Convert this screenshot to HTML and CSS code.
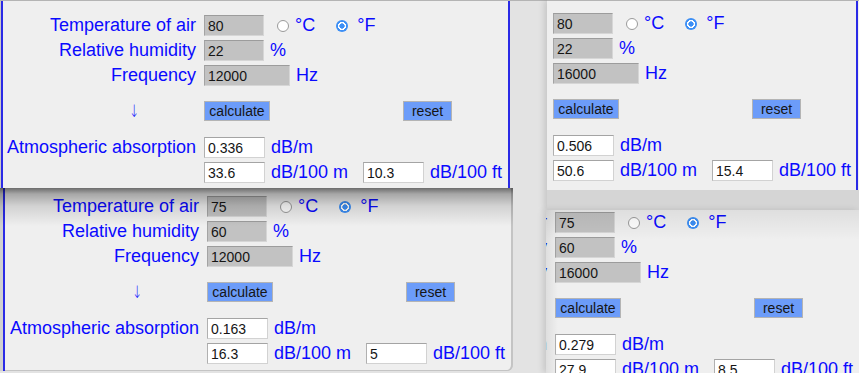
FILE: index.html
```html
<!DOCTYPE html>
<html lang="en">
	<head>
		<meta charset="UTF-8">
		<title>Atmospheric absorption</title>
		<link rel="stylesheet" href="styles.css">
	</head>
	<body>
		<div class="desk">
			<div class="shot shot-a">
				<form class="form">
					<div class="row">
						<span class="label">Temperature of air</span>
						<input class="field" value="80">
						<input class="radio" type="radio" name="ua">
						<span class="unit deg">°C</span>
						<input class="radio radio-f" type="radio" name="ua" checked>
						<span class="unit deg-f">°F</span>
					</div>
					<div class="row">
						<span class="label">Relative humidity</span>
						<input class="field" value="22">
						<span class="unit">%</span>
					</div>
					<div class="row">
						<span class="label">Frequency</span>
						<input class="field field-wide" value="12000">
						<span class="unit">Hz</span>
					</div>
					<div class="row row-buttons">
						<span class="arrow">↓</span>
						<button type="button" class="btn btn-calc">calculate</button>
						<button type="button" class="btn btn-reset">reset</button>
					</div>
					<div class="row">
						<span class="label">Atmospheric absorption</span>
						<input class="field out" value="0.336">
						<span class="unit">dB/m</span>
					</div>
					<div class="row">
						<span class="label"></span>
						<input class="field out" value="33.6">
						<span class="unit">dB/100 m</span>
						<input class="field out out-ft" value="10.3">
						<span class="unit">dB/100 ft</span>
					</div>
				</form>
			</div>

			<div class="shot shot-b">
				<form class="form">
					<div class="row">
						<span class="label">Temperature of air</span>
						<input class="field" value="75">
						<input class="radio" type="radio" name="ub">
						<span class="unit deg">°C</span>
						<input class="radio radio-f" type="radio" name="ub" checked>
						<span class="unit deg-f">°F</span>
					</div>
					<div class="row">
						<span class="label">Relative humidity</span>
						<input class="field" value="60">
						<span class="unit">%</span>
					</div>
					<div class="row">
						<span class="label">Frequency</span>
						<input class="field field-wide" value="12000">
						<span class="unit">Hz</span>
					</div>
					<div class="row row-buttons">
						<span class="arrow">↓</span>
						<button type="button" class="btn btn-calc">calculate</button>
						<button type="button" class="btn btn-reset">reset</button>
					</div>
					<div class="row">
						<span class="label">Atmospheric absorption</span>
						<input class="field out" value="0.163">
						<span class="unit">dB/m</span>
					</div>
					<div class="row">
						<span class="label"></span>
						<input class="field out" value="16.3">
						<span class="unit">dB/100 m</span>
						<input class="field out out-ft" value="5">
						<span class="unit">dB/100 ft</span>
					</div>
				</form>
			</div>

			<div class="shot shot-c">
				<form class="form">
					<div class="row">
						<span class="label">Temperature of air</span>
						<input class="field" value="80">
						<input class="radio" type="radio" name="uc">
						<span class="unit deg">°C</span>
						<input class="radio radio-f" type="radio" name="uc" checked>
						<span class="unit deg-f">°F</span>
					</div>
					<div class="row">
						<span class="label">Relative humidity</span>
						<input class="field" value="22">
						<span class="unit">%</span>
					</div>
					<div class="row">
						<span class="label">Frequency</span>
						<input class="field field-wide" value="16000">
						<span class="unit">Hz</span>
					</div>
					<div class="row row-buttons">
						<span class="arrow">↓</span>
						<button type="button" class="btn btn-calc">calculate</button>
						<button type="button" class="btn btn-reset">reset</button>
					</div>
					<div class="row">
						<span class="label">Atmospheric absorption</span>
						<input class="field out" value="0.506">
						<span class="unit">dB/m</span>
					</div>
					<div class="row">
						<span class="label"></span>
						<input class="field out" value="50.6">
						<span class="unit">dB/100 m</span>
						<input class="field out out-ft" value="15.4">
						<span class="unit">dB/100 ft</span>
					</div>
				</form>
			</div>

			<div class="shot shot-d">
				<form class="form">
					<div class="row">
						<span class="label">Temperature of air</span>
						<input class="field" value="75">
						<input class="radio" type="radio" name="ud">
						<span class="unit deg">°C</span>
						<input class="radio radio-f" type="radio" name="ud" checked>
						<span class="unit deg-f">°F</span>
					</div>
					<div class="row">
						<span class="label">Relative humidity</span>
						<input class="field" value="60">
						<span class="unit">%</span>
					</div>
					<div class="row">
						<span class="label">Frequency</span>
						<input class="field field-wide" value="16000">
						<span class="unit">Hz</span>
					</div>
					<div class="row row-buttons">
						<span class="arrow">↓</span>
						<button type="button" class="btn btn-calc">calculate</button>
						<button type="button" class="btn btn-reset">reset</button>
					</div>
					<div class="row">
						<span class="label">Atmospheric absorption</span>
						<input class="field out" value="0.279">
						<span class="unit">dB/m</span>
					</div>
					<div class="row">
						<span class="label"></span>
						<input class="field out" value="27.9">
						<span class="unit">dB/100 m</span>
						<input class="field out out-ft" value="8.5">
						<span class="unit">dB/100 ft</span>
					</div>
				</form>
			</div>
		</div>
	</body>
</html>
```

FILE: styles.css
```css
*, *::before, *::after {
	box-sizing: border-box;
}

html, body {
	margin: 0;
	padding: 0;
}

body {
	font-family: "Liberation Sans", Arial, sans-serif;
	background: #e3e3e3;
}

.desk {
	position: relative;
	width: 859px;
	height: 373px;
	overflow: hidden;
	background: #e3e3e3;
	box-shadow: inset 0 1px #b4b4b4;
}

/* each shot is one cropped screenshot of the same form */
.shot {
	position: absolute;
	overflow: hidden;
	background: #efefef;
}

.shot-a {
	left: 0;
	top: 0;
	width: 510px;
	height: 188px;
	box-shadow: inset 0 1px #b4b4b4, inset 1px 0 #c8c8c8, inset 3px 0 #2a2ae6, inset -2px 0 #2a2ae6;
}

.shot-b {
	left: 0;
	top: 188px;
	width: 513px;
	height: 183px;
	border-radius: 0 0 6px 0;
	box-shadow: inset 3px 0 #d0d0d0, inset 5px 0 #2a2ae6, inset -2px 0 #c4c4c4, inset 0 -1px #c4c4c4;
}

.shot-b::after {
	content: "";
	position: absolute;
	left: 0;
	right: 0;
	top: 0;
	height: 40px;
	background: linear-gradient(rgba(0, 0, 0, .55), rgba(0, 0, 0, .3) 6px, rgba(0, 0, 0, .12) 18px, rgba(0, 0, 0, 0) 38px);
}

.shot-c {
	left: 547px;
	top: 0;
	width: 312px;
	height: 210px;
	border-bottom: 20px solid #d5d5d5;
	box-shadow: inset 0 1px #b4b4b4, inset -1px 0 #efefef, inset -3px 0 #2a2ae6, -3px 0 6px rgba(0, 0, 0, .12);
}

.shot-d {
	left: 546px;
	top: 210px;
	width: 313px;
	height: 163px;
	box-shadow: -3px 0 6px rgba(0, 0, 0, .12);
}

.shot-d::after {
	content: "";
	position: absolute;
	left: 0;
	right: 0;
	top: 0;
	bottom: 0;
	background: linear-gradient(rgba(0, 0, 0, .07), rgba(0, 0, 0, 0) 30px),
		linear-gradient(90deg, rgba(0, 0, 0, .07), rgba(0, 0, 0, 0) 12px);
}

.form {
	width: 510px;
	margin: 0;
	padding-top: 15px;
}

.shot-b .form {
	margin: -7px 0 0 3px;
}

.shot-c .form {
	margin: -2px 0 0 -198px;
}

.shot-d .form {
	margin: -13px 0 0 -195px;
}

.row {
	display: flex;
	align-items: center;
	height: 21px;
	margin-bottom: 4px;
}

.row-buttons {
	height: 20px;
	margin-top: 15px;
	margin-bottom: 16px;
}

.label {
	flex: none;
	width: 204px;
	padding-right: 8px;
	text-align: right;
	color: #0a0aff;
	font-size: 18px;
	white-space: nowrap;
}

.unit {
	margin-left: 6px;
	color: #0a0aff;
	font-size: 18px;
	white-space: nowrap;
}

.unit.deg {
	margin-left: 6px;
}

.unit.deg-f {
	margin-left: 9px;
}

.field {
	flex: none;
	width: 60px;
	height: 21px;
	margin: 0;
	padding: 0 3px;
	border: 1px solid;
	border-color: #9c9c9c #d6d6d6 #d6d6d6 #a4a4a4;
	background: #c2c2c2;
	color: #151515;
	font-family: "Liberation Sans", Arial, sans-serif;
	font-size: 14px;
	outline: none;
}

.field-wide {
	width: 86px;
}

.field.out {
	width: 61px;
	background: #fff;
	border-color: #a4a4a4 #d2d2d2 #d2d2d2 #b0b0b0;
}

.field.out-ft {
	margin-left: 15px;
}

.radio {
	appearance: none;
	flex: none;
	width: 12px;
	height: 12px;
	margin: 0 0 0 13px;
	border: 1px solid #9a9a9a;
	border-radius: 50%;
	background: #fff;
}

.radio-f {
	margin-left: 21px;
}

.radio:checked {
	border: 0;
	background: radial-gradient(circle, #3d8ff5 0 2.4px, #fff 2.9px 3.8px, #3d8ff5 4.3px);
}

.arrow {
	flex: none;
	width: 204px;
	padding-left: 64px;
	text-align: center;
	color: #0a0aff;
	font-family: "DejaVu Sans", sans-serif;
	font-size: 17px;
	font-weight: 200;
	line-height: 20px;
	transform: scaleX(.7);
	transform-origin: 134px 50%;
}

.btn {
	flex: none;
	height: 20px;
	padding: 0;
	border: 1px solid #b4b4b4;
	background: #6c9cf9;
	color: #151515;
	font-family: "Liberation Sans", Arial, sans-serif;
	font-size: 14px;
}

.btn-calc {
	width: 66px;
}

.btn-reset {
	width: 49px;
	margin-left: 133px;
}
```
